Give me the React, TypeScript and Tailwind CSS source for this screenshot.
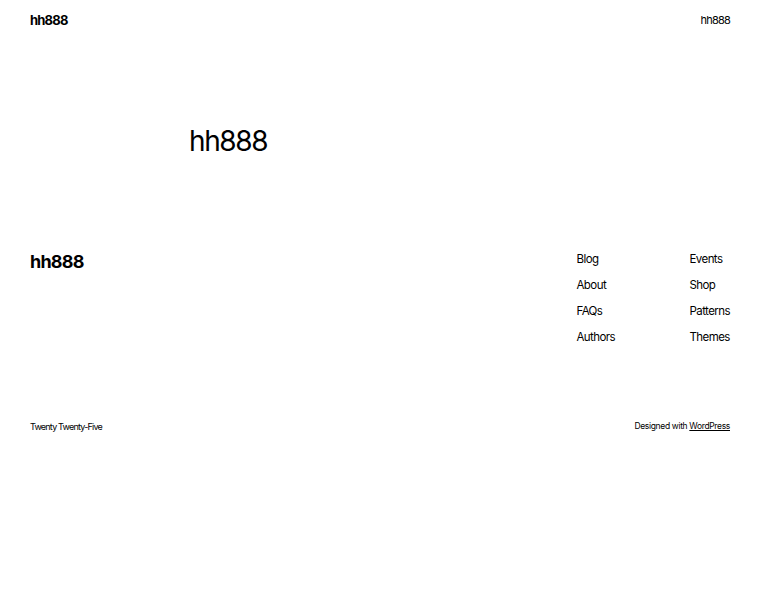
export default function App() {
  const col1 = ["Blog", "About", "FAQs", "Authors"];
  const col2 = ["Events", "Shop", "Patterns", "Themes"];

  return (
    <div className="min-h-[600px] w-[760px] bg-white text-black font-['Inter',sans-serif] tracking-[-0.05em]">
      {/* header */}
      <header className="flex items-center justify-between px-[30px] h-[41px]">
        <span className="text-[13px] font-bold">hh888</span>
        <span className="text-[11px]">hh888</span>
      </header>

      {/* main */}
      <main className="pl-[189px] pt-[79px] h-[200px]">
        <h1 className="text-[28px] leading-[42px] font-normal tracking-[-0.05em]">hh888</h1>
      </main>

      {/* footer */}
      <footer className="px-[30px]">
        <div className="flex justify-between">
          <span className="text-[18px] font-bold leading-[42px]">hh888</span>
          <nav className="flex pt-[9px] tracking-[-0.035em]">
            <ul className="w-[113px] flex flex-col gap-[8px]">
              {col1.map((t) => (
                <li key={t} className="text-[11.5px] leading-[18px]">{t}</li>
              ))}
            </ul>
            <ul className="flex flex-col gap-[8px]">
              {col2.map((t) => (
                <li key={t} className="text-[11.5px] leading-[18px]">{t}</li>
              ))}
            </ul>
          </nav>
        </div>
        <div className="flex justify-between items-center mt-[74px] text-[9px]">
          <span>Twenty Twenty-Five</span>
          <span className="text-[8.5px] tracking-[-0.04em]">
            Designed with <a className="underline">WordPress</a>
          </span>
        </div>
      </footer>
    </div>
  );
}
